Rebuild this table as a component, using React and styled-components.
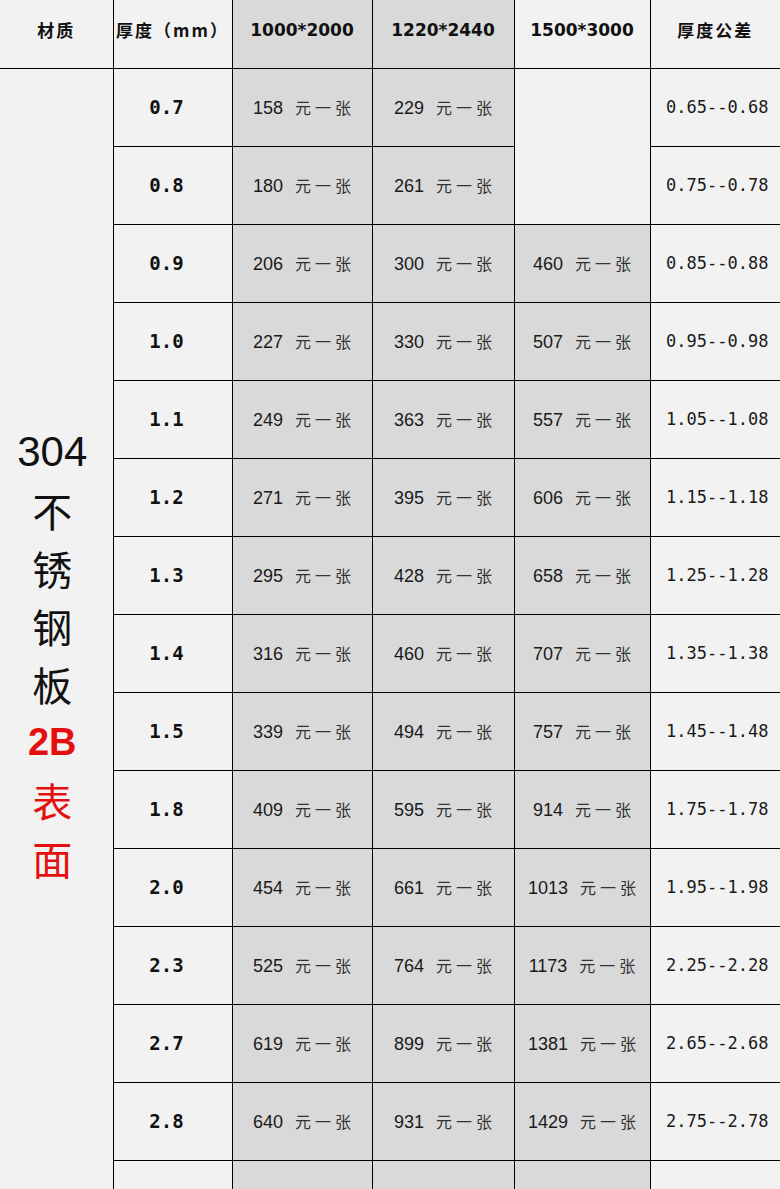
import React from "react";
import styled, { createGlobalStyle } from "styled-components";

const Global = createGlobalStyle`
  html, body { margin: 0; padding: 0; overflow: hidden; background: #f2f2f2; }
  body { font-family: "Liberation Sans", "Noto Sans CJK SC", sans-serif; color: #111; }
`;

const LIGHT = "#f2f2f2";
const SHADE = "#d9d9d9";
const LINE = "1px solid #000";

const Table = styled.table`
  width: 780px;
  table-layout: fixed;
  border-collapse: collapse;
  background: ${LIGHT};
`;

const Col = styled.col`
  width: ${(p) => p.$w}px;
`;

const HeadRow = styled.tr`
  height: 68px;
`;

const BodyRow = styled.tr`
  height: 78px;
`;

const Cell = styled.td`
  padding: 0;
  text-align: center;
  vertical-align: middle;
  background: ${(p) => (p.$shade ? SHADE : LIGHT)};
  border-left: ${LINE};
  border-bottom: ${LINE};
`;

const HeadCell = styled(Cell).attrs({ as: "th" })`
  font-weight: bold;
  font-family: ${(p) =>
    p.$latin
      ? `"DejaVu Sans", sans-serif`
      : `"Noto Sans CJK SC", sans-serif`};
  font-size: 17px;
  letter-spacing: ${(p) => (p.$latin ? "0" : "2px")};
  padding-bottom: 8px;
  &:first-child { border-left: none; }
`;

const MaterialCell = styled(Cell)`
  border-left: none;
  border-bottom: none;
  padding-top: 4px;
`;

const MaterialText = styled.div`
  display: flex;
  flex-direction: column;
  align-items: center;
  padding-right: 8px;
`;

const MatLine = styled.span`
  display: block;
  height: 58px;
  line-height: 58px;
  font-size: ${(p) => (p.$bold ? "38px" : p.$latin ? "42px" : "40px")};
  font-family: ${(p) =>
    p.$latin
      ? `"Liberation Sans", sans-serif`
      : `"Noto Sans CJK SC", sans-serif`};
  font-weight: ${(p) => (p.$bold ? "bold" : "normal")};
  color: ${(p) => (p.$red ? "#e41010" : "#111")};
`;

const ThickCell = styled(Cell)`
  font-family: "DejaVu Sans Mono", monospace;
  font-weight: bold;
  font-size: 19px;
  padding-right: 12px;
`;

const PriceCell = styled(Cell)`
  font-family: "Liberation Sans", sans-serif;
  font-size: 18px;
  color: #1a1a1a;
  white-space: nowrap;
`;

const Unit = styled.span`
  font-family: "Noto Sans CJK SC", sans-serif;
  font-size: 16px;
  letter-spacing: 4px;
  margin-left: 12px;
  margin-right: -4px;
  color: #333;
`;

const TolCell = styled(Cell)`
  font-family: "DejaVu Sans Mono", monospace;
  font-size: 17px;
  color: #1a1a1a;
  white-space: nowrap;
  padding-left: 4px;
`;

const rows = [
  ["0.7", 158, 229, null, "0.65--0.68"],
  ["0.8", 180, 261, null, "0.75--0.78"],
  ["0.9", 206, 300, 460, "0.85--0.88"],
  ["1.0", 227, 330, 507, "0.95--0.98"],
  ["1.1", 249, 363, 557, "1.05--1.08"],
  ["1.2", 271, 395, 606, "1.15--1.18"],
  ["1.3", 295, 428, 658, "1.25--1.28"],
  ["1.4", 316, 460, 707, "1.35--1.38"],
  ["1.5", 339, 494, 757, "1.45--1.48"],
  ["1.8", 409, 595, 914, "1.75--1.78"],
  ["2.0", 454, 661, 1013, "1.95--1.98"],
  ["2.3", 525, 764, 1173, "2.25--2.28"],
  ["2.7", 619, 899, 1381, "2.65--2.68"],
  ["2.8", 640, 931, 1429, "2.75--2.78"],
];

const Price = ({ value }) => (
  <>
    {value}
    <Unit>元一张</Unit>
  </>
);

export default function App() {
  return (
    <>
      <Global />
      <Table>
        <colgroup>
          <Col $w={113} />
          <Col $w={119} />
          <Col $w={140} />
          <Col $w={142} />
          <Col $w={136} />
          <Col $w={130} />
        </colgroup>
        <thead>
          <HeadRow>
            <HeadCell>材质</HeadCell>
            <HeadCell>厚度（mm）</HeadCell>
            <HeadCell $latin $shade>1000*2000</HeadCell>
            <HeadCell $latin $shade>1220*2440</HeadCell>
            <HeadCell $latin>1500*3000</HeadCell>
            <HeadCell>厚度公差</HeadCell>
          </HeadRow>
        </thead>
        <tbody>
          {rows.map(([t, a, b, c, tol], i) => (
            <BodyRow key={t}>
              {i === 0 && (
                <MaterialCell rowSpan={rows.length + 1}>
                  <MaterialText>
                    <MatLine $latin>304</MatLine>
                    <MatLine>不</MatLine>
                    <MatLine>锈</MatLine>
                    <MatLine>钢</MatLine>
                    <MatLine>板</MatLine>
                    <MatLine $latin $bold $red>2B</MatLine>
                    <MatLine $red>表</MatLine>
                    <MatLine $red>面</MatLine>
                  </MaterialText>
                </MaterialCell>
              )}
              <ThickCell>{t}</ThickCell>
              <PriceCell $shade>
                <Price value={a} />
              </PriceCell>
              <PriceCell $shade>
                <Price value={b} />
              </PriceCell>
              {i === 0 && <PriceCell rowSpan={2} />}
              {c !== null && (
                <PriceCell $shade>
                  <Price value={c} />
                </PriceCell>
              )}
              <TolCell>{tol}</TolCell>
            </BodyRow>
          ))}
          <BodyRow>
            <ThickCell />
            <PriceCell $shade />
            <PriceCell $shade />
            <PriceCell $shade />
            <TolCell />
          </BodyRow>
        </tbody>
      </Table>
    </>
  );
}
